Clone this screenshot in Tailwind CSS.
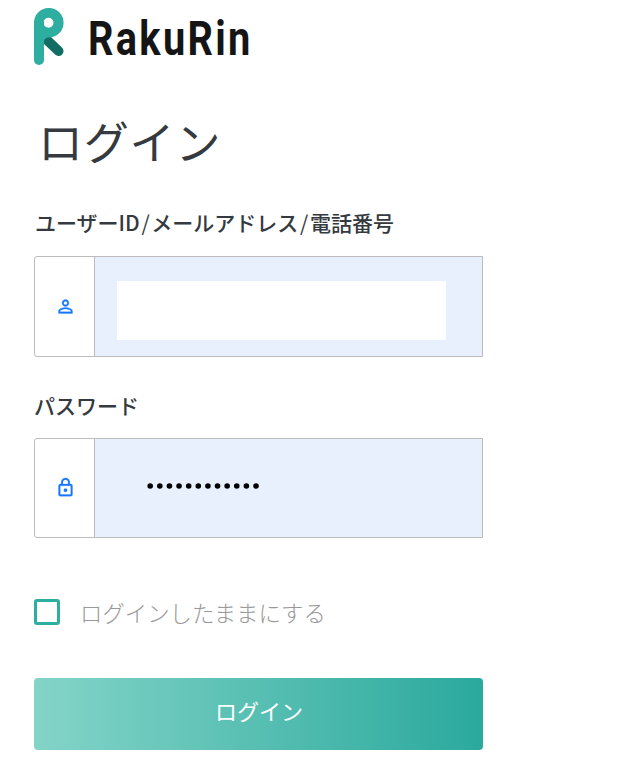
<!DOCTYPE html>
<html lang="ja">

<head>
  <meta charset="UTF-8">
  <meta name="viewport" content="width=device-width, initial-scale=1.0">
  <title>RakuRin | ログイン</title>
  <script src="https://cdn.jsdelivr.net/npm/@tailwindcss/browser@4"></script>
</head>

<body class="bg-white font-['Noto_Sans_CJK_JP',sans-serif] text-[#343a40] overflow-hidden">
  <main class="ml-[34px] w-[449px] pt-2">
    <svg class="block overflow-visible" width="240" height="58" viewBox="0 0 240 58" role="img" aria-label="RakuRin">
      <path d="M14 33 24.500 43" stroke="#126e64" stroke-width="10" stroke-linecap="round" />
      <path d="M5 52V15" stroke="#2eada1" stroke-width="10" stroke-linecap="round" />
      <path fill="#2eada1" fill-rule="evenodd" d="M0 15A14.8 14.8 0 1 1 15 29.5Q10 29.5 10 34V52H0ZM14.5 9.7a5 5 0 1 0 0 10 5 5 0 0 0 0-10Z" />
      <text transform="translate(54 47) scale(.82 1)" textLength="198" class="font-[Roboto,sans-serif] font-bold text-[48.500px]" fill="#151515">RakuRin</text>
    </svg>

    <h1 class="mt-[41px] mb-[32px] h-[68px] pl-1 text-[45px] leading-[68px] tracking-[.8px] whitespace-nowrap">ログイン</h1>

    <form>
      <label for="user" class="block h-[30px] pl-px text-[21px] leading-[30px] font-medium whitespace-nowrap">ユーザーID<span class="inline-block mx-[1.700px] font-normal">/</span>メールアドレス<span class="inline-block mx-[1.700px] font-normal">/</span>電話番号</label>
      <div class="mt-[19px] flex h-[101px] rounded-l-[3px] border border-[#bdbbbd] overflow-hidden">
        <div class="flex w-[59px] shrink-0 items-center justify-center">
          <svg class="ml-px size-[21px]" viewBox="0 0 24 24" fill="#1677ff" stroke="#1677ff" stroke-width=".3">
            <path d="M12 5.900a2.100 2.100 0 1 1 0 4.200 2.100 2.100 0 0 1 0-4.200m0 9c2.970 0 6.100 1.460 6.100 2.100v1.100H5.900V17c0-.64 3.130-2.100 6.100-2.100M12 4C9.790 4 8 5.790 8 8s1.790 4 4 4 4-1.790 4-4-1.790-4-4-4m0 9c-2.670 0-8 1.340-8 4v3h16v-3c0-2.660-5.330-4-8-4" />
          </svg>
        </div>
        <div class="flex-1 border-l border-[#bdbbbd] bg-[#e8f0fe] pt-6 pl-[22px]">
          <input id="user" type="text" class="block h-[59px] w-[329px] bg-white outline-none">
        </div>
      </div>

      <label class="mt-[33px] block h-[30px] text-[21px] leading-[30px] font-medium">パスワード</label>
      <div class="mt-[18px] flex h-[100px] rounded-l-[3px] border border-[#bdbbbd] overflow-hidden">
        <div class="flex w-[59px] shrink-0 items-center justify-center pb-[2px]">
          <svg class="ml-px size-[21px]" viewBox="0 0 24 24" fill="#1677ff" stroke="#1677ff" stroke-width=".3">
            <path d="M18 8h-1V6A5 5 0 0 0 7 6v2H6a2 2 0 0 0-2 2v10a2 2 0 0 0 2 2h12a2 2 0 0 0 2-2V10a2 2 0 0 0-2-2M9 6a3 3 0 0 1 6 0v2H9zm9 14H6V10h12zm-6-3a2 2 0 1 0 0-4 2 2 0 0 0 0 4" />
          </svg>
        </div>
        <div class="flex flex-1 items-center border-l border-[#bdbbbd] bg-[#e8f0fe] pb-1 pl-[52px]">
          <svg width="115" height="6" viewBox="0 0 115 6" aria-label="パスワード入力済み">
            <path d="M3.200 3H112" stroke="#000" stroke-width="5.600" stroke-linecap="round" stroke-dasharray="0 9.620" />
          </svg>
        </div>
      </div>

      <div class="mt-[59px] flex h-[30px] items-center">
        <span class="size-[26px] rounded-[3px] border-3 border-[#2eada1]"></span>
        <span class="ml-5 text-[22.400px] leading-[30px] font-light text-[#999] whitespace-nowrap">ログインしたままにする</span>
      </div>

      <button type="button" class="mt-[51px] block h-[72px] w-full rounded-[4px] bg-linear-to-r/srgb from-[#84d4c8] to-[#2ba99d] pb-2 pl-px text-[22px] text-white">ログイン</button>
    </form>
  </main>
</body>

</html>
